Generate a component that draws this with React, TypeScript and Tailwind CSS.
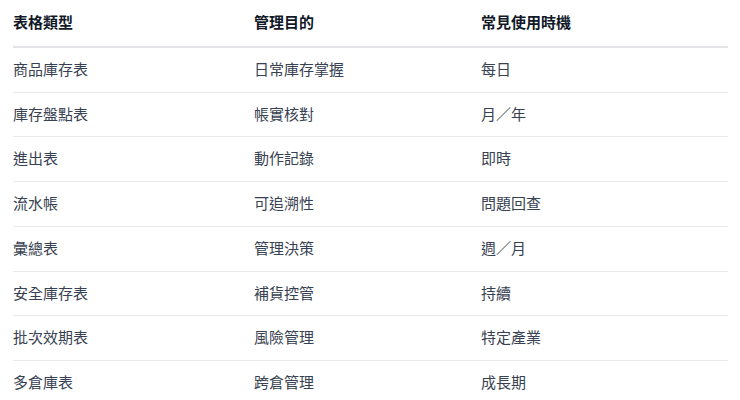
const rows = [
  { type: '商品庫存表', purpose: '日常庫存掌握', when: '每日' },
  { type: '庫存盤點表', purpose: '帳實核對', when: '月／年' },
  { type: '進出表', purpose: '動作記錄', when: '即時' },
  { type: '流水帳', purpose: '可追溯性', when: '問題回查' },
  { type: '彙總表', purpose: '管理決策', when: '週／月' },
  { type: '安全庫存表', purpose: '補貨控管', when: '持續' },
  { type: '批次效期表', purpose: '風險管理', when: '特定產業' },
  { type: '多倉庫表', purpose: '跨倉管理', when: '成長期' },
];

export default function App() {
  return (
    <div className="min-h-screen bg-white px-[13px] font-['Inter','Noto_Sans_CJK_TC',sans-serif] text-[15px]">
      <table className="w-[715px] table-fixed border-collapse text-left">
        <colgroup>
          <col className="w-[241px]" />
          <col className="w-[227px]" />
          <col />
        </colgroup>
        <thead>
          <tr className="border-b-2 border-[#e2e4e8]">
            <th className="py-[11px] font-bold leading-[24px] text-[#111827]">表格類型</th>
            <th className="py-[11px] font-bold leading-[24px] text-[#111827]">管理目的</th>
            <th className="py-[11px] font-bold leading-[24px] text-[#111827]">常見使用時機</th>
          </tr>
        </thead>
        <tbody>
          {rows.map((r) => (
            <tr key={r.type} className="border-b border-[#e8eaed] text-[#374151]">
              <td className="py-[10px] leading-[23.7px]">{r.type}</td>
              <td className="py-[10px] leading-[23.7px]">{r.purpose}</td>
              <td className="py-[10px] leading-[23.7px]">{r.when}</td>
            </tr>
          ))}
        </tbody>
      </table>
    </div>
  );
}
